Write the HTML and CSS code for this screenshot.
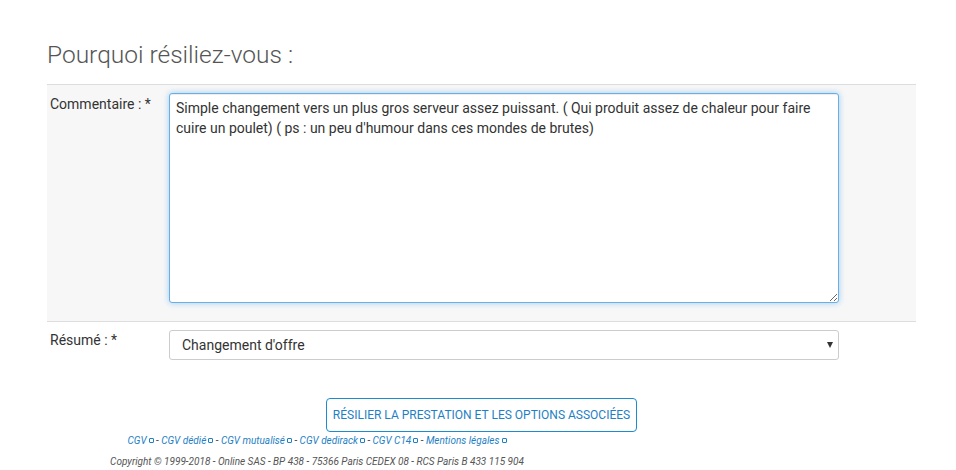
FILE: index.html
```html
<!DOCTYPE html>
<html lang="fr">
<head>
  <meta charset="UTF-8" />
  <meta name="viewport" content="width=device-width, initial-scale=1.0"/>
  <title>Résiliation</title>
  <link rel="stylesheet" href="styles.css">
</head>
<body>
    <div class="page">
        <h2 class="title">Pourquoi résiliez-vous :</h2>

        <form class="resil-form">
            <div class="form-row form-row-grey">
                <label class="form-label" for="comment">Commentaire : *</label>
                <textarea id="comment" class="form-input comment-box">Simple changement vers un plus gros serveur assez puissant. ( Qui produit assez de chaleur pour faire cuire un poulet) ( ps : un peu d'humour dans ces mondes de brutes)</textarea>
            </div>

            <div class="form-row">
                <label class="form-label" for="summary">Résumé : *</label>
                <div class="select-wrap">
                    <select id="summary" class="form-input summary-select">
                        <option>Changement d'offre</option>
                    </select>
                </div>
            </div>

            <div class="form-actions">
                <button type="button" class="btn-resil">RÉSILIER LA PRESTATION ET LES OPTIONS ASSOCIÉES</button>
            </div>
        </form>
    </div>

    <footer class="footer">
        <p class="footer-links">
            <a href="#">CGV<span class="ext"></span></a> - <a href="#">CGV dédié<span class="ext"></span></a> - <a href="#">CGV mutualisé<span class="ext"></span></a> - <a href="#">CGV dedirack<span class="ext"></span></a> - <a href="#">CGV C14<span class="ext"></span></a> - <a href="#">Mentions légales<span class="ext"></span></a>
        </p>
        <p class="copyright">Copyright © 1999-2018 - Online SAS - BP 438 - 75366 Paris CEDEX 08 - RCS Paris B 433 115 904</p>
    </footer>
</body>
</html>
```

FILE: styles.css
```css
* {
    margin: 0;
    padding: 0;
    box-sizing: border-box;
}

body {
    background: #fff;
    font-family: Roboto, 'Liberation Sans', sans-serif;
    font-size: 14px;
    color: #333;
}

.page {
    width: 869px;
    margin-left: 47px;
    padding-top: 40px;
}

.title {
    font-size: 24.5px;
    font-weight: 300;
    color: #555;
    line-height: 30px;
    margin-bottom: 14px;
}

/* Lignes du formulaire */
.form-row {
    display: flex;
    align-items: flex-start;
    padding: 8px 77px 0 3px;
}

.form-row-grey {
    background: #f7f7f7;
    border-top: 1px solid #ddd;
    border-bottom: 1px solid #ddd;
    padding-bottom: 18px;
}

.form-label {
    width: 119px;
    flex-shrink: 0;
    line-height: 20px;
    padding-top: 1px;
    color: #333;
}

.form-input {
    font-family: Roboto, 'Liberation Sans', sans-serif;
    font-size: 14px;
    color: #333;
    background: #fff;
}

.comment-box {
    width: 670px;
    height: 210px;
    padding: 4px 6px;
    line-height: 20px;
    border: 1px solid #66afe9;
    border-radius: 3px;
    outline: none;
    resize: vertical;
    box-shadow: inset 0 1px 1px rgba(0, 0, 0, 0.075), 0 0 6px rgba(102, 175, 233, 0.6);
}

.form-row + .form-row .form-label {
    padding-top: 0;
}

.select-wrap {
    position: relative;
    width: 670px;
}

.select-wrap::after {
    content: "";
    position: absolute;
    right: 6px;
    top: 12px;
    border-left: 3px solid transparent;
    border-right: 3px solid transparent;
    border-top: 6px solid #333;
    pointer-events: none;
}

.summary-select {
    -webkit-appearance: none;
    appearance: none;
    width: 100%;
    height: 30px;
    padding: 0 12px;
    border: 1px solid #ccc;
    border-radius: 3px;
    outline: none;
}

/* Bouton */
.form-actions {
    text-align: center;
    padding-top: 38px;
}

.btn-resil {
    font-family: Roboto, 'Liberation Sans', sans-serif;
    font-size: 12px;
    color: #1f7fc4;
    background: #fff;
    border: 1px solid #1a8ccf;
    border-radius: 4px;
    height: 34px;
    padding: 0 6px;
    cursor: pointer;
}

/* Pied de page */
.footer {
    width: 634px;
    text-align: center;
    font-size: 10px;
    font-style: italic;
    line-height: 14px;
    padding-top: 2px;
}

.footer-links {
    color: #555;
}

.footer-links a {
    color: #1f7fc4;
    text-decoration: none;
}

.ext {
    display: inline-block;
    width: 5px;
    height: 5px;
    margin-left: 2px;
    border: 1px solid #1f7fc4;
    border-radius: 1px;
    vertical-align: 1px;
}

.copyright {
    color: #555;
    margin-top: 7px;
}
```
